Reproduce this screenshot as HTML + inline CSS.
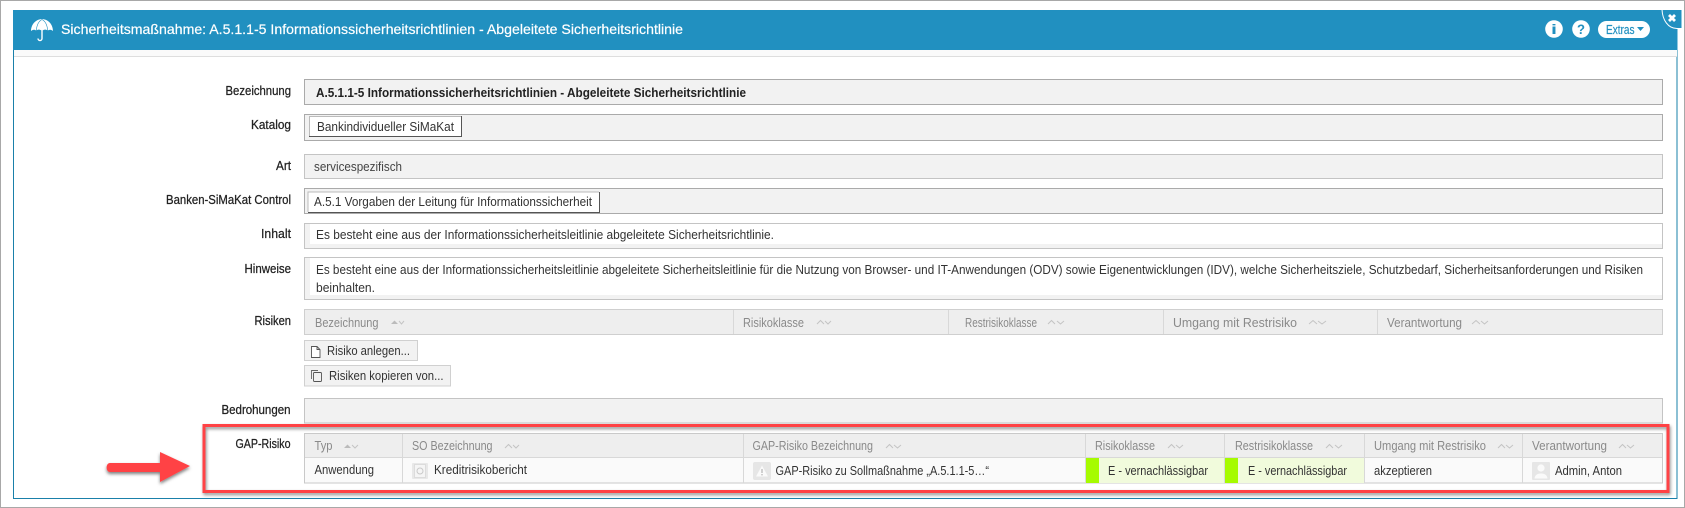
<!DOCTYPE html>
<html lang="de"><head><meta charset="utf-8"><title>Sicherheitsmaßnahme</title>
<style>
html,body{margin:0;padding:0;background:#fff}
svg{display:block}
text{font-family:"Liberation Sans",sans-serif;font-size:12.5px;fill:#333}
.l{fill:#222;stroke:#222;stroke-width:.25px}
.h{fill:#8a8a8a}
.v{fill:#444}
.f{fill:#f2f2f2;stroke:#c4c4c4}
.g{stroke:#d8d8d8;stroke-width:1}
.a{fill:none;stroke:#c4c4c4;stroke-width:1}
</style></head><body>
<svg width="1685" height="508" viewBox="0 0 1685 508" xmlns="http://www.w3.org/2000/svg">
<defs>
<filter id="s" x="-5%" y="-30%" width="110%" height="160%"><feDropShadow dx="1" dy="2" stdDeviation="1.6" flood-color="#000" flood-opacity=".45"/></filter>
<filter id="s2" x="-20%" y="-30%" width="140%" height="170%"><feDropShadow dx="0" dy="2" stdDeviation="1.6" flood-color="#000" flood-opacity=".5"/></filter>
</defs>
<rect x=".5" y=".5" width="1684" height="507" fill="#fff" stroke="#a8a8a8"/>
<rect x="13.5" y="10.5" width="1663.5" height="488" fill="#fff" stroke="#1a80aa"/>
<rect x="13" y="10" width="1664.500" height="40" fill="#2190c0"/>
<rect x="14" y="50" width="1663" height="6" fill="#fafafa"/>
<rect x="14" y="56" width="1663" height="1" fill="#dedede"/>

<!-- umbrella -->
<path d="M31 31C31.200 24 36 19.300 42 19C48 19.300 52.800 24 53 31C51.500 29.500 49.500 29.300 47.700 30.500C46 29.300 44.500 29.300 43 30.300H41C39.500 29.300 38 29.300 36.300 30.500C34.500 29.300 32.500 29.500 31 31Z" fill="#fff"/>
<path d="M36.300 30.500C36.800 25 39 21 42 19.500C45 21 47.200 25 47.700 30.500" fill="none" stroke="#2190c0" stroke-width=".6"/>
<path d="M42 29V38.500C42 41.200 38 41.200 38 38.500" fill="none" stroke="#fff" stroke-width="1.400"/>
<text x="61" y="34" textLength="622" lengthAdjust="spacingAndGlyphs" style="font-size:14px;fill:#fff;stroke:#fff;stroke-width:.2px">Sicherheitsmaßnahme: A.5.1.1-5 Informationssicherheitsrichtlinien - Abgeleitete Sicherheitsrichtlinie</text>

<!-- top right -->
<circle cx="1554" cy="29" r="8.800" fill="#fff"/>
<text x="1551" y="34" textLength="6" lengthAdjust="spacingAndGlyphs" style="font-size:13.500px;font-weight:bold;fill:#2190c0">i</text>
<circle cx="1581" cy="29" r="8.800" fill="#fff"/>
<text x="1577" y="34" textLength="8" lengthAdjust="spacingAndGlyphs" style="font-size:13.500px;font-weight:bold;fill:#2190c0">?</text>
<rect x="1598" y="21" width="52" height="17" rx="8.500" fill="#fff"/>
<text x="1606" y="34" textLength="28.500" lengthAdjust="spacingAndGlyphs" style="font-size:12.500px;fill:#2190c0;stroke:#2190c0;stroke-width:.2px">Extras</text>
<path d="M1637 27h7l-3.500 4z" fill="#2190c0"/>
<path d="M1662 9.500H1682V28.500H1677C1668 28.500 1662.500 20 1662 9.500Z" fill="#2190c0" stroke="#fff"/>
<path d="M1669 15l6 6M1675 15l-6 6" stroke="#fff" stroke-width="2.800"/>

<!-- fields -->
<rect class="f" x="304.500" y="79.500" width="1358" height="25" style="stroke:#aaa"/>
<rect class="f" x="304.500" y="114.500" width="1358" height="26" style="stroke:#aaa"/>
<rect class="f" x="304.500" y="154.500" width="1358" height="24"/>
<rect class="f" x="304.500" y="188.500" width="1358" height="25" style="stroke:#aaa"/>
<rect x="304.500" y="223.500" width="1358" height="25" fill="#fff" stroke="#c4c4c4"/>
<rect x="305" y="224" width="5" height="24" fill="#f2f2f2"/>
<rect x="305" y="244" width="1357" height="4" fill="#f2f2f2"/>
<rect x="304.500" y="257.500" width="1358" height="42" fill="#fff" stroke="#c4c4c4"/>
<rect x="305" y="258" width="5" height="41" fill="#f2f2f2"/>
<rect x="305" y="295" width="1357" height="4" fill="#f2f2f2"/>

<!-- chips -->
<rect x="309" y="116" width="153" height="21" fill="#fff"/>
<path d="M309.500 136.500V116.500H461" fill="none" stroke="#bbb"/>
<path d="M309 136.500H461.500V116" fill="none" stroke="#555"/>
<rect x="307.500" y="191.500" width="292" height="21" fill="#fff"/>
<path d="M308 212V192H599" fill="none" stroke="#bbb"/>
<path d="M308 212.500H599.500V192" fill="none" stroke="#555"/>

<!-- labels -->
<text class="l" x="225.500" y="95" textLength="65.500" lengthAdjust="spacingAndGlyphs">Bezeichnung</text>
<text class="l" x="251" y="129" textLength="40" lengthAdjust="spacingAndGlyphs">Katalog</text>
<text class="l" x="276" y="170" textLength="15" lengthAdjust="spacingAndGlyphs">Art</text>
<text class="l" x="166" y="204" textLength="125" lengthAdjust="spacingAndGlyphs">Banken-SiMaKat Control</text>
<text class="l" x="261" y="238" textLength="30" lengthAdjust="spacingAndGlyphs">Inhalt</text>
<text class="l" x="244.500" y="273" textLength="46.500" lengthAdjust="spacingAndGlyphs">Hinweise</text>
<text class="l" x="254.500" y="325" textLength="36.500" lengthAdjust="spacingAndGlyphs">Risiken</text>
<text class="l" x="221.500" y="414" textLength="69" lengthAdjust="spacingAndGlyphs">Bedrohungen</text>
<text class="l" x="235.500" y="448" textLength="55" lengthAdjust="spacingAndGlyphs">GAP-Risiko</text>

<!-- values -->
<text x="316" y="97" textLength="430" lengthAdjust="spacingAndGlyphs" style="font-weight:bold;fill:#222">A.5.1.1-5 Informationssicherheitsrichtlinien - Abgeleitete Sicherheitsrichtlinie</text>
<text x="317" y="131" textLength="137" lengthAdjust="spacingAndGlyphs">Bankindividueller SiMaKat</text>
<text class="v" x="314" y="171" textLength="88" lengthAdjust="spacingAndGlyphs">servicespezifisch</text>
<text x="314" y="206" textLength="278" lengthAdjust="spacingAndGlyphs">A.5.1 Vorgaben der Leitung für Informationssicherheit</text>
<text x="316" y="239" textLength="458" lengthAdjust="spacingAndGlyphs">Es besteht eine aus der Informationssicherheitsleitlinie abgeleitete Sicherheitsrichtlinie.</text>
<text x="316" y="274" textLength="1327" lengthAdjust="spacingAndGlyphs">Es besteht eine aus der Informationssicherheitsleitlinie abgeleitete Sicherheitsleitlinie für die Nutzung von Browser- und IT-Anwendungen (ODV) sowie Eigenentwicklungen (IDV), welche Sicherheitsziele, Schutzbedarf, Sicherheitsanforderungen und Risiken</text>
<text x="316" y="292" textLength="59" lengthAdjust="spacingAndGlyphs">beinhalten.</text>

<!-- Risiken table -->
<rect x="304.500" y="309.500" width="1358" height="25" fill="#eee" stroke="#cfcfcf"/>
<path class="g" d="M733.500 310V334M948.500 310V334M1163.500 310V334M1377.500 310V334"/>
<text class="h" x="315" y="327" textLength="63.500" lengthAdjust="spacingAndGlyphs">Bezeichnung</text>
<text class="h" x="743" y="327" textLength="61" lengthAdjust="spacingAndGlyphs">Risikoklasse</text>
<text class="h" x="965" y="327" textLength="72" lengthAdjust="spacingAndGlyphs">Restrisikoklasse</text>
<text class="h" x="1173" y="327" textLength="124" lengthAdjust="spacingAndGlyphs">Umgang mit Restrisiko</text>
<text class="h" x="1387" y="327" textLength="75" lengthAdjust="spacingAndGlyphs">Verantwortung</text>
<path d="M391 324l3.500-3.500 3.500 3.500z" fill="#bbb"/><path class="a" d="M399 321l2.500 3 2.500-3"/>
<path class="a" d="M817 324l3.500-3.500 3.500 3.500M825 321l3 3 3-3M1048 324l3.500-3.500 3.500 3.500M1057 321l3.500 3 3.500-3M1309 324l4-3.500 4 3.500M1318 321l4 3 4-3M1472 324l4-3.500 4 3.500M1481 321l3.500 3 3.500-3"/>

<!-- buttons -->
<rect x="304.500" y="340.500" width="113" height="20" fill="#f2f2f2" stroke="#d0d0d0"/>
<path d="M311.500 346.500H317L320 349.500V357.500H311.500ZM317 346.500V349.500H320" fill="#fff" stroke="#555" stroke-width=".9"/>
<text x="327" y="355" textLength="83" lengthAdjust="spacingAndGlyphs">Risiko anlegen...</text>
<rect x="304.500" y="365.500" width="146" height="20.500" fill="#f2f2f2" stroke="#d0d0d0"/>
<path d="M318 370.500H311.500V379" fill="none" stroke="#666" stroke-width=".9"/>
<rect x="313.500" y="372.500" width="8" height="9" rx="1" fill="#f2f2f2" stroke="#555" stroke-width=".9"/>
<text x="329" y="380" textLength="114.500" lengthAdjust="spacingAndGlyphs">Risiken kopieren von...</text>

<!-- Bedrohungen -->
<rect class="f" x="304.500" y="398.500" width="1358" height="24.500"/>

<!-- GAP table -->
<rect x="304.500" y="433.500" width="1358" height="49.500" fill="#fafafa" stroke="#c9c9c9"/>
<rect x="305" y="434" width="1357" height="23" fill="#eee"/>
<path d="M305 457.500H1662" stroke="#d8d8d8"/>
<rect x="1086" y="458" width="138" height="25" fill="#f1fbdc"/>
<rect x="1225" y="458" width="139" height="25" fill="#f1fbdc"/>
<rect x="1086" y="458" width="13" height="25" fill="#a6fb00"/>
<rect x="1225" y="458" width="13" height="25" fill="#a6fb00"/>
<path class="g" d="M402.500 434V483M743.500 434V483M1085.500 434V483M1224.500 434V483M1364.500 434V483M1522.500 434V483"/>
<text class="h" x="314.500" y="450" textLength="18" lengthAdjust="spacingAndGlyphs">Typ</text>
<text class="h" x="412" y="450" textLength="80.500" lengthAdjust="spacingAndGlyphs">SO Bezeichnung</text>
<text class="h" x="752.500" y="450" textLength="120.500" lengthAdjust="spacingAndGlyphs">GAP-Risiko Bezeichnung</text>
<text class="h" x="1095" y="450" textLength="60" lengthAdjust="spacingAndGlyphs">Risikoklasse</text>
<text class="h" x="1235" y="450" textLength="78" lengthAdjust="spacingAndGlyphs">Restrisikoklasse</text>
<text class="h" x="1374" y="450" textLength="112" lengthAdjust="spacingAndGlyphs">Umgang mit Restrisiko</text>
<text class="h" x="1532" y="450" textLength="75" lengthAdjust="spacingAndGlyphs">Verantwortung</text>
<path d="M344 448l3.500-3.500 3.500 3.500z" fill="#bbb"/><path class="a" d="M352 445l3 3 3-3"/>
<path class="a" d="M505 448l3.500-3.500 3.500 3.500M513 445l3 3 3-3M886 448l3.500-3.500 3.500 3.500M894 445l3.500 3 3.500-3M1168 448l3.500-3.500 3.500 3.500M1176 445l3.500 3 3.500-3M1326 448l3.500-3.500 3.500 3.500M1335 445l3.500 3 3.500-3M1498 448l3.500-3.500 3.500 3.500M1506 445l3.500 3 3.500-3M1619 448l3.500-3.500 3.500 3.500M1627 445l3.500 3 3.500-3"/>

<text x="314.500" y="474" textLength="59.500" lengthAdjust="spacingAndGlyphs">Anwendung</text>
<rect x="412" y="463" width="16" height="16" rx="1" fill="#e8e8e8"/>
<rect x="414.500" y="464.500" width="11" height="13" fill="#f5f5f5" stroke="#dcdcdc"/>
<circle cx="420" cy="471" r="3" fill="none" stroke="#c9c9c9"/>
<text x="434" y="474" textLength="93" lengthAdjust="spacingAndGlyphs">Kreditrisikobericht</text>
<rect x="753" y="462" width="18" height="18" rx="2" fill="#e6e6e6"/>
<path d="M762 465.500L768 476.500H756Z" fill="#fafafa"/>
<rect x="761.300" y="469" width="1.400" height="4" fill="#bdbdbd"/><rect x="761.300" y="474" width="1.400" height="1.400" fill="#bdbdbd"/>
<text x="775.500" y="475" textLength="213.500" lengthAdjust="spacingAndGlyphs">GAP-Risiko zu Sollmaßnahme „A.5.1.1-5…“</text>
<text x="1108" y="475" textLength="100" lengthAdjust="spacingAndGlyphs">E - vernachlässigbar</text>
<text x="1248" y="475" textLength="99" lengthAdjust="spacingAndGlyphs">E - vernachlässigbar</text>
<text x="1374" y="475" textLength="58" lengthAdjust="spacingAndGlyphs">akzeptieren</text>
<rect x="1532" y="462" width="18" height="18" rx="1" fill="#e6e6e6"/>
<circle cx="1541" cy="468" r="3.600" fill="#fafafa"/>
<path d="M1534.500 478.500C1535 474.500 1538 473.500 1541 473.500C1544 473.500 1547 474.500 1547.500 478.500Z" fill="#fafafa"/>
<text x="1555" y="475" textLength="67" lengthAdjust="spacingAndGlyphs">Admin, Anton</text>

<!-- red annotation -->
<rect x="204" y="425.500" width="1464" height="66" fill="none" stroke="#ff4245" stroke-width="3" filter="url(#s)"/>
<path d="M110 463H160V452L190 466L160 482V472H110C105.500 472 105.500 463 110 463Z" fill="#ff4245" filter="url(#s2)"/>
</svg>
</body></html>
